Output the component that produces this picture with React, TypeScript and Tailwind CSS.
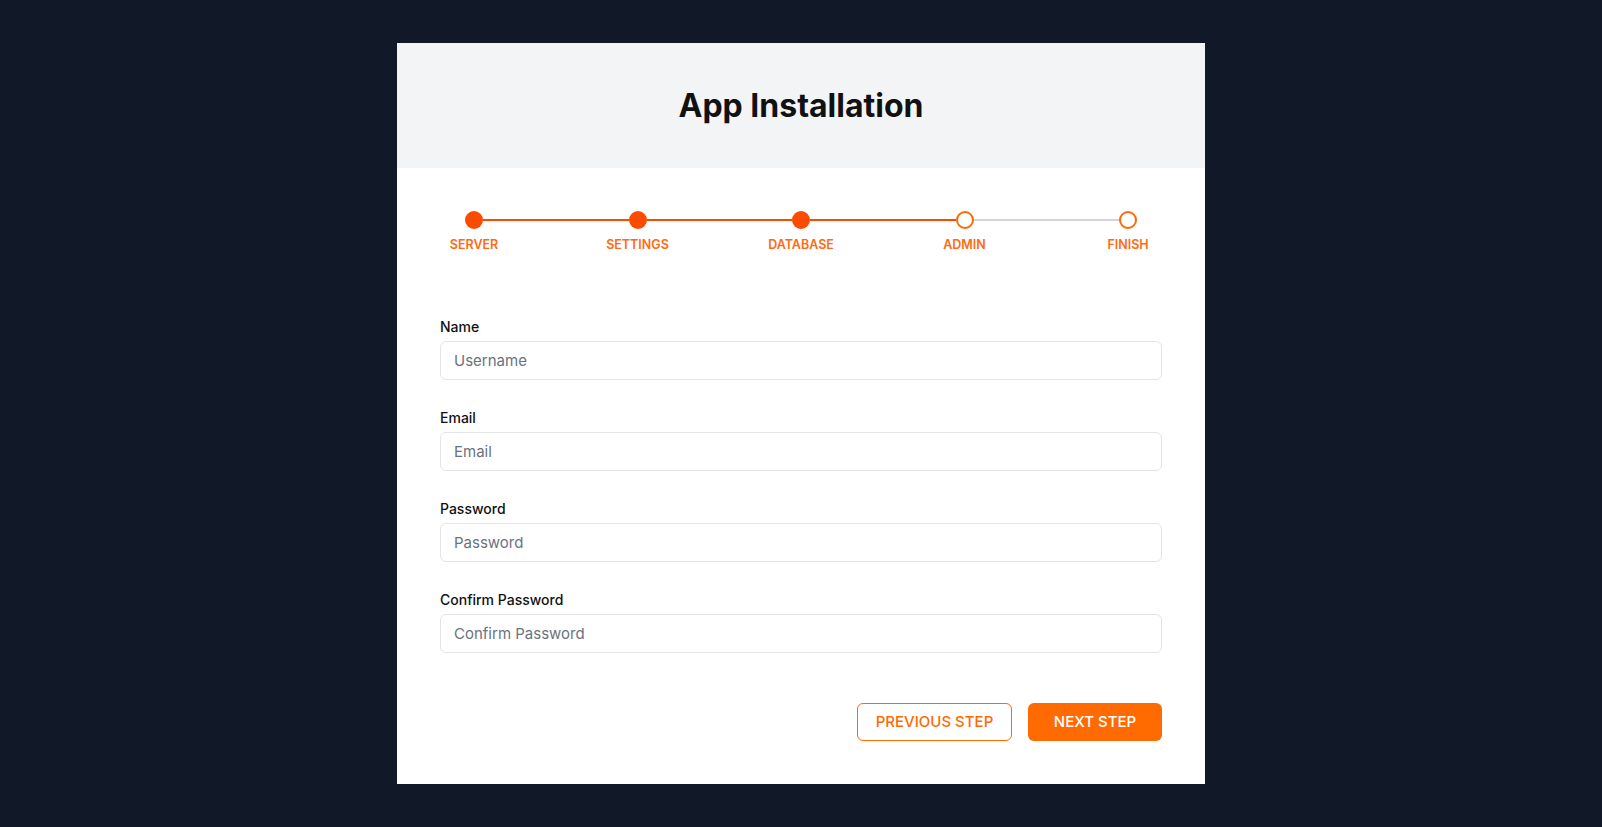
import { Fragment } from 'react';

const steps = [
  { label: 'SERVER', done: true },
  { label: 'SETTINGS', done: true },
  { label: 'DATABASE', done: true },
  { label: 'ADMIN', done: false },
  { label: 'FINISH', done: false },
];

const fields = [
  { label: 'Name', placeholder: 'Username', type: 'text' },
  { label: 'Email', placeholder: 'Email', type: 'email' },
  { label: 'Password', placeholder: 'Password', type: 'password' },
  { label: 'Confirm Password', placeholder: 'Confirm Password', type: 'password' },
];

function Stepper() {
  return (
    <div>
      <div className="flex items-center px-[25px]">
        {steps.map((s, i) => (
          <Fragment key={s.label}>
            {i > 0 && (
              <div className={`h-[2px] flex-1 ${steps[i - 1].done ? 'bg-[#f94c00]' : 'bg-[#d1d5db]'}`} />
            )}
            <div
              className={`h-[18px] w-[18px] shrink-0 rounded-full ${
                s.done ? 'bg-[#f94c00]' : 'border-2 border-[#ff6a00] bg-white'
              }`}
            />
          </Fragment>
        ))}
      </div>
      <div className="mt-2 flex justify-between">
        {steps.map((s) => (
          <div key={s.label} className="w-[68px] text-center text-[12.5px] font-semibold leading-4 text-[#ff6a13]">
            {s.label}
          </div>
        ))}
      </div>
    </div>
  );
}

export default function App() {
  return (
    <div className="flex min-h-screen items-center justify-center bg-[#111827] font-['Inter','Liberation_Sans',sans-serif]">
      <div className="w-[808px] bg-white">
        <div className="flex h-[125px] items-center justify-center bg-[#f3f4f6]">
          <h1 className="text-[32px] font-bold leading-9 text-[#111111]">App Installation</h1>
        </div>
        <div className="px-[43px] pb-[43px] pt-[43px]">
          <Stepper />
          <form className="mt-[64px] flex flex-col gap-7" onSubmit={(e) => e.preventDefault()}>
            {fields.map((f) => (
              <div key={f.label}>
                <label className="mb-1 block text-sm font-medium leading-5 text-[#111111]">{f.label}</label>
                <input
                  type={f.type}
                  placeholder={f.placeholder}
                  className="block h-[39px] w-full rounded-md border border-[#e2e4e8] px-[13px] text-[15px] text-gray-900 placeholder:text-[#6b7280] focus:outline-none"
                />
              </div>
            ))}
            <div className="mt-[22px] flex justify-end gap-4">
              <button
                type="button"
                className="h-[38px] w-[155px] rounded-md border border-[#ff6a00] text-[15px] font-medium text-[#ff6a00]"
              >
                PREVIOUS STEP
              </button>
              <button type="submit" className="h-[38px] w-[134px] rounded-md bg-[#ff6b00] text-[15px] font-medium text-white">
                NEXT STEP
              </button>
            </div>
          </form>
        </div>
      </div>
    </div>
  );
}
